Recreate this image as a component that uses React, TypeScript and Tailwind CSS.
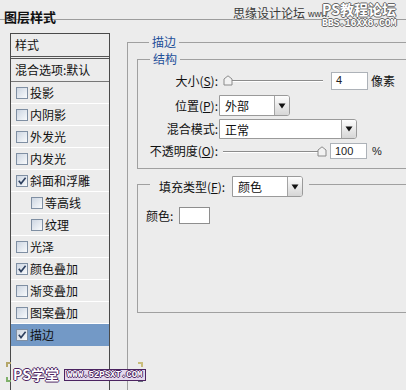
import React from "react";

function Check({ checked }: { checked?: boolean }) {
  return (
    <span className="w-[12px] h-[12px] border border-[#7f8fa3] bg-linear-to-br from-[#cdd6e2] to-[#f8fafc] flex items-center justify-center shrink-0">
      {checked && (
        <svg width="10" height="10" viewBox="0 0 10 10">
          <path d="M1.8 4.8 L4 7.6 L8.6 1.8" fill="none" stroke="#2f4160" strokeWidth="1.6" />
        </svg>
      )}
    </span>
  );
}

function Row({ label, checked, indent, selected }: { label: string; checked?: boolean; indent?: boolean; selected?: boolean }) {
  return (
    <div
      className={
        selected
          ? "h-[22px] border-b border-[#7399c6] bg-[#7399c6] flex items-center pl-[5px] gap-[2px]"
          : indent
          ? "h-[22px] border-b border-white flex items-center pl-[20px] gap-[2px]"
          : "h-[22px] border-b border-white flex items-center pl-[5px] gap-[2px]"
      }
    >
      <Check checked={checked} />
      <span className="text-[12px] leading-[16px] text-[#111]">{label}</span>
    </div>
  );
}

function Arrow() {
  return (
    <svg width="8" height="6" viewBox="0 0 8 6">
      <path d="M0.5 0.5 H7.5 L4 5.5 Z" fill="#111" />
    </svg>
  );
}

function Select({ text, wide }: { text: string; wide?: boolean }) {
  return (
    <div
      className={
        (wide ? "w-[138px]" : "w-[71px]") +
        " h-full flex bg-white border border-[#9a9a9a] rounded-r-[3px] shrink-0"
      }
    >
      <span className="flex-1 pl-[5px] text-[12px] leading-[19px] text-[#111] flex items-center">{text}</span>
      <span className="w-[15px] border-l border-[#a4a4a4] bg-linear-to-b from-[#fdfdfd] to-[#d6d6d6] rounded-r-[2px] flex items-center justify-center">
        <Arrow />
      </span>
    </div>
  );
}

function Thumb() {
  return (
    <svg width="10" height="11" viewBox="0 0 10 11">
      <path d="M1 4 L5 0.8 L9 4 V10 H1 Z" fill="#f2f2f2" stroke="#8a8a8a" strokeWidth="1" />
    </svg>
  );
}

function Input({ value, h16 }: { value: string; h16?: boolean }) {
  return (
    <div
      className={
        (h16 ? "h-[16px]" : "h-[18px]") +
        " w-[37px] bg-white border border-[#adb2b8] pl-[4px] flex items-center text-[11px] font-['Liberation_Sans',sans-serif] text-[#222] shrink-0"
      }
    >
      {value}
    </div>
  );
}

function Label({ children }: { children: React.ReactNode }) {
  return (
    <span className="w-[80px] shrink-0 text-right text-[12px] leading-[16px] text-[#111] whitespace-nowrap">{children}</span>
  );
}

export default function App() {
  return (
    <div className="w-[406px] h-[390px] overflow-hidden bg-[#ececec] relative font-['Noto_Sans_CJK_SC',sans-serif]">
      {/* title bar */}
      <div className="h-[20px] border-b border-[#9c9c9c] pl-[4px] pt-[3px]">
        <span className="text-[13px] leading-[14px] font-bold text-[#111]">图层样式</span>
      </div>

      <div className="flex">
        {/* left list */}
        <div className="ml-[10px] mt-[13px] w-[100px] h-[400px] border border-[#4a4a4a] flex flex-col shrink-0">
          <div className="h-[25px] border-b-[3px] border-double border-[#555] pl-[4px] flex items-center text-[12px] leading-[16px] text-[#111]">
            样式
          </div>
          <div className="h-[23px] border-b border-[#777] pl-[4px] flex items-center text-[12px] leading-[16px] text-[#111]">
            混合选项:默认
          </div>
          <Row label="投影" />
          <Row label="内阴影" />
          <Row label="外发光" />
          <Row label="内发光" />
          <Row label="斜面和浮雕" checked />
          <Row label="等高线" indent />
          <Row label="纹理" indent />
          <Row label="光泽" />
          <Row label="颜色叠加" checked />
          <Row label="渐变叠加" />
          <Row label="图案叠加" />
          <Row label="描边" checked selected />
        </div>

        {/* right */}
        <fieldset className="ml-[17px] mt-[14px] w-[300px] h-[400px] border border-[#a0a0a0] pl-[9px] shrink-0">
          <legend className="ml-[12px] px-[3px] text-[12px] leading-[16px] text-[#1e4f99]">描边</legend>

          <fieldset className="mt-[1px] w-[300px] border border-[#a0a0a0] pb-[9px]">
            <legend className="ml-[12px] px-[3px] text-[12px] leading-[16px] text-[#1e4f99]">结构</legend>
            <div className="flex flex-col pt-[4px]">
              <div className="h-[19px] flex items-center">
                <Label>
                  大小(<u>S</u>):
                </Label>
                <div className="ml-[5px] relative w-[100px] h-[11px] shrink-0">
                  <div className="absolute left-[6px] right-0 top-[5px] h-[2px] border-t border-[#8c8c8c] border-b border-b-white" />
                  <div className="absolute left-0 top-0 flex">
                    <Thumb />
                  </div>
                </div>
                <div className="ml-[8px]">
                  <Input value="4" />
                </div>
                <span className="ml-[3px] text-[12px] leading-[16px] text-[#111]">像素</span>
              </div>

              <div className="mt-[5px] h-[21px] flex items-center">
                <Label>
                  位置(<u>P</u>):
                </Label>
                <div className="ml-[1px] h-full">
                  <Select text="外部" />
                </div>
              </div>

              <div className="mt-[3px] h-[20px] flex items-center">
                <Label>混合模式:</Label>
                <div className="ml-[1px] h-full">
                  <Select text="正常" wide />
                </div>
              </div>

              <div className="mt-[4px] h-[16px] flex items-center">
                <Label>
                  不透明度(<u>O</u>):
                </Label>
                <div className="ml-[5px] relative w-[104px] h-[11px] shrink-0">
                  <div className="absolute left-0 right-[6px] top-[5px] h-[2px] border-t border-[#8c8c8c] border-b border-b-white" />
                  <div className="absolute left-[94px] top-0 flex">
                    <Thumb />
                  </div>
                </div>
                <div className="ml-[3px]">
                  <Input value="100" h16 />
                </div>
                <span className="ml-[5px] text-[11px] font-['Liberation_Sans',sans-serif] text-[#222]">%</span>
              </div>
            </div>
          </fieldset>

          <fieldset className="mt-[7px] w-[300px] border border-[#a0a0a0] pb-[88px]">
            <legend className="ml-[12px] pl-[9px] pr-[6px]">
              <div className="h-[17px] flex items-start">
                <div className="h-[21px] flex items-center">
                  <span className="text-[12px] leading-[16px] text-[#111] whitespace-nowrap">
                    填充类型(<u>F</u>):
                  </span>
                  <div className="ml-[7px] h-full">
                    <Select text="颜色" />
                  </div>
                </div>
              </div>
            </legend>
            <div className="pt-[14px] pl-[8px]">
              <div className="h-[17px] flex items-center">
                <span className="text-[12px] leading-[16px] text-[#111]">颜色:</span>
                <span className="ml-[6px] w-[31px] h-[17px] bg-white border border-[#8e8e8e]" />
              </div>
            </div>
          </fieldset>
        </fieldset>
      </div>

      {/* watermarks */}
      <div className="absolute left-[233px] top-[5px] flex items-end gap-[3px] text-[#3a3a3a]">
        <span className="text-[12px] leading-[16px]">思缘设计论坛</span>
        <span className="text-[9px] leading-[13px] font-['Liberation_Sans',sans-serif]">www.</span>
      </div>
      <div className="absolute left-[322px] top-[1px] flex flex-col items-start">
        <span className="text-[14px] leading-[17px] font-bold text-white [text-shadow:1px_0_#666,-1px_0_#666,0_1px_#666,0_-1px_#666]">
          PS教程论坛
        </span>
        <span className="text-[10px] leading-[12px] font-bold tracking-[-0.3px] font-['Liberation_Mono',monospace] text-white [text-shadow:1px_0_#666,-1px_0_#666,0_1px_#666,0_-1px_#666]">
          BBS.16XX8.COM
        </span>
      </div>

      <div className="absolute left-[6px] top-[362px] w-[5px] h-[5px] border-t-2 border-l-2 border-[#b5a76a]" />
      <div className="absolute left-[6px] top-[377px] w-[5px] h-[5px] border-b-2 border-l-2 border-[#7fb06a]" />
      <div className="absolute left-[138px] top-[362px] w-[5px] h-[5px] border-t-2 border-r-2 border-[#c9bd7a]" />
      <div className="absolute left-[138px] top-[377px] w-[5px] h-[5px] border-b-2 border-r-2 border-[#6a7080]" />
      <div className="absolute left-[13px] top-[366px] flex items-center gap-[5px]">
        <span className="text-[14px] leading-[17px] font-bold text-white [text-shadow:1px_0_#4b2360,-1px_0_#4b2360,0_1px_#4b2360,0_-1px_#4b2360]">
          PS学堂
        </span>
        <span className="h-[12px] px-[2px] border border-[#4b2360] bg-[#e4d8ec] text-[9px] leading-[10px] font-bold font-['Liberation_Mono',monospace] text-white [text-shadow:1px_0_#4b2360,-1px_0_#4b2360,0_1px_#4b2360,0_-1px_#4b2360]">
          WWW.52PSXT.COM
        </span>
      </div>
    </div>
  );
}
